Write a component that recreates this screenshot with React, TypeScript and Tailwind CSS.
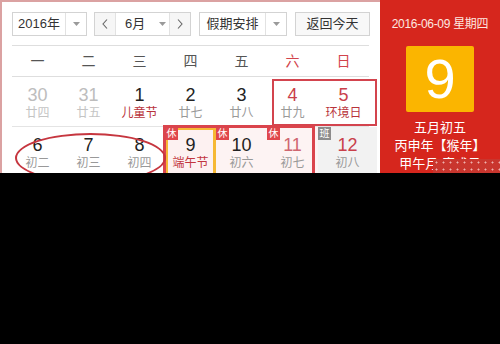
import type { ReactNode } from "react";

const FONT = { fontFamily: '"Liberation Sans", "Noto Sans CJK SC", sans-serif' };

type Day = {
  n: string;
  sub: string;
  numClass?: string;
  subClass?: string;
  cellClass?: string;
  badge?: "休" | "班";
  badgePos?: string;
};

const weekdays = ["一", "二", "三", "四", "五", "六", "日"];

const row1: Day[] = [
  { n: "30", sub: "廿四", numClass: "text-[#bdbdbd]", subClass: "text-[#c4c4c4]" },
  { n: "31", sub: "廿五", numClass: "text-[#bdbdbd]", subClass: "text-[#c4c4c4]" },
  { n: "1", sub: "儿童节", subClass: "text-[#b8333b]" },
  { n: "2", sub: "廿七" },
  { n: "3", sub: "廿八" },
  { n: "4", sub: "廿九", numClass: "text-[#c9404a]" },
  { n: "5", sub: "环境日", numClass: "text-[#c9404a]", subClass: "text-[#b8333b]" },
];

const row2: Day[] = [
  { n: "6", sub: "初二" },
  { n: "7", sub: "初三" },
  { n: "8", sub: "初四" },
  {
    n: "9",
    sub: "端午节",
    subClass: "text-[#c2363e]",
    cellClass: "bg-[#fdf1f1] border-[3px] border-[#f6b935] pt-[5px]",
    badge: "休",
    badgePos: "-left-[3px] -top-[3px]",
  },
  { n: "10", sub: "初六", cellClass: "bg-[#fdf3f3]", badge: "休" },
  { n: "11", sub: "初七", numClass: "text-[#cf6670]", cellClass: "bg-[#fdf3f3]", badge: "休" },
  { n: "12", sub: "初八", numClass: "text-[#c9404a]", cellClass: "bg-[#f2f2f2] -mr-[8px]", badge: "班" },
];

function Caret() {
  return (
    <svg width="7" height="4" viewBox="0 0 7 4">
      <path d="M0 0h7L3.5 4z" fill="#9a9a9a" />
    </svg>
  );
}

function Chevron({ dir }: { dir: "left" | "right" }) {
  return (
    <svg width="6" height="10" viewBox="0 0 6 10">
      <path
        d={dir === "left" ? "M5 0.5L1 5l4 4.5" : "M1 0.5L5 5l-4 4.5"}
        fill="none"
        stroke="#666"
        strokeWidth="1.1"
      />
    </svg>
  );
}

function Select({ width, label, textWidth }: { width: string; label: string; textWidth: string }) {
  return (
    <div className={`flex h-[24px] border border-[#d3d3d3] bg-white ${width}`}>
      <div className={`flex items-center justify-center text-[13px] text-[#333] ${textWidth}`}>
        {label}
      </div>
      <div className="flex flex-1 items-center justify-center border-l border-[#e2e2e2]">
        <Caret />
      </div>
    </div>
  );
}

function Cell({ d }: { d: Day }) {
  return (
    <div className={`relative flex flex-col items-center ${d.cellClass ?? "pt-[8px]"}`}>
      {d.badge && (
        <span
          className={`absolute flex h-[13px] w-[13px] items-center justify-center text-[10px] leading-none text-white ${
            d.badgePos ?? "left-0 top-0"
          } ${d.badge === "休" ? "bg-[#e0474c]" : "bg-[#8c8c8c]"}`}
        >
          {d.badge}
        </span>
      )}
      <span className={`text-[18px] leading-[20px] ${d.numClass ?? "text-[#222]"}`}>{d.n}</span>
      <span className={`text-[12px] leading-[16px] ${d.subClass ?? "text-[#999]"}`}>{d.sub}</span>
    </div>
  );
}

function Row({ days, children }: { days: Day[]; children?: ReactNode }) {
  return (
    <div className="grid h-[50px] w-[357px] grid-cols-7 border-b border-[#e4e4e4]">
      {days.map((d) => (
        <Cell key={d.n} d={{ ...d, cellClass: d.cellClass && !d.cellClass.includes("pt-") ? `${d.cellClass} pt-[8px]` : d.cellClass }} />
      ))}
      {children}
    </div>
  );
}

export default function App() {
  return (
    <div className="h-[344px] w-[500px] overflow-hidden bg-black" style={FONT}>
      <div className="flex h-[173px] overflow-hidden bg-white">
        <div className="relative w-[380px] border-l-2 border-t-2 border-[#dba2a2] pl-[10px] pt-[10px]">
          <div className="flex items-center">
            <Select width="w-[75px]" label="2016年" textWidth="w-[52px]" />
            <div className="ml-[7px] flex h-[24px] w-[97px] border border-[#d3d3d3]">
              <div className="flex w-[20px] items-center justify-center bg-[#f6f6f6]">
                <Chevron dir="left" />
              </div>
              <div className="flex flex-1 items-center gap-[14px] border-x border-[#e2e2e2] pl-[9px] text-[13px] text-[#333]">
                <span>6月</span>
                <Caret />
              </div>
              <div className="flex w-[20px] items-center justify-center bg-[#f6f6f6]">
                <Chevron dir="right" />
              </div>
            </div>
            <div className="ml-[8px]">
              <Select width="w-[88px]" label="假期安排" textWidth="w-[65px]" />
            </div>
            <div className="ml-[8px] flex h-[24px] w-[75px] items-center justify-center border border-[#d3d3d3] bg-[#f8f8f8] text-[13px] text-[#333]">
              返回今天
            </div>
          </div>

          <div className="mt-[9px] grid h-[32px] w-[357px] grid-cols-7 items-center border-y border-[#dedede] text-[14px]">
            {weekdays.map((w, i) => (
              <span key={w} className={`text-center ${i >= 5 ? "text-[#d2444c]" : "text-[#555]"}`}>
                {w}
              </span>
            ))}
          </div>

          <Row days={row1} />
          <Row days={row2} />

          {/* weekend outline 4-5 */}
          <div className="pointer-events-none absolute left-[270px] top-[77px] h-[47px] w-[105px] border-2 border-[#d3444e]" />
          {/* holiday outline 9-11 */}
          <div className="pointer-events-none absolute left-[161px] top-[123px] h-[60px] w-[152px] border-[3px] border-[#da444c]" />
          {/* hand-drawn ellipse around 6-8 */}
          <div className="pointer-events-none absolute left-[13px] top-[131px] h-[50px] w-[151px] rounded-[50%] border-2 border-[#c6363f]" />
        </div>

        <div className="relative flex flex-1 flex-col items-center bg-[#d6261d] text-white">
          <div className="pt-[17px] text-[12px] leading-[15px] tracking-[-0.3px] text-[#fde8e0]">2016-06-09 星期四</div>
          <div className="mt-[14px] flex h-[69px] w-[68px] items-center justify-center rounded-[2px] bg-[#fbb500] text-[56px] leading-none">
            9
          </div>
          <div className="mt-[7px] text-[13px] leading-[18px]">五月初五</div>
          <div className="text-[13px] leading-[18px]">丙申年【猴年】</div>
          <div className="text-[13px] leading-[18px]">甲午月 庚戌日</div>
          <div className="absolute left-[53px] top-[159px] h-[14px] w-[67px] bg-[#c9362e] bg-[radial-gradient(circle,#efb2ae_0.8px,transparent_1.2px)] bg-[length:7px_7px]" />
        </div>
      </div>
    </div>
  );
}
